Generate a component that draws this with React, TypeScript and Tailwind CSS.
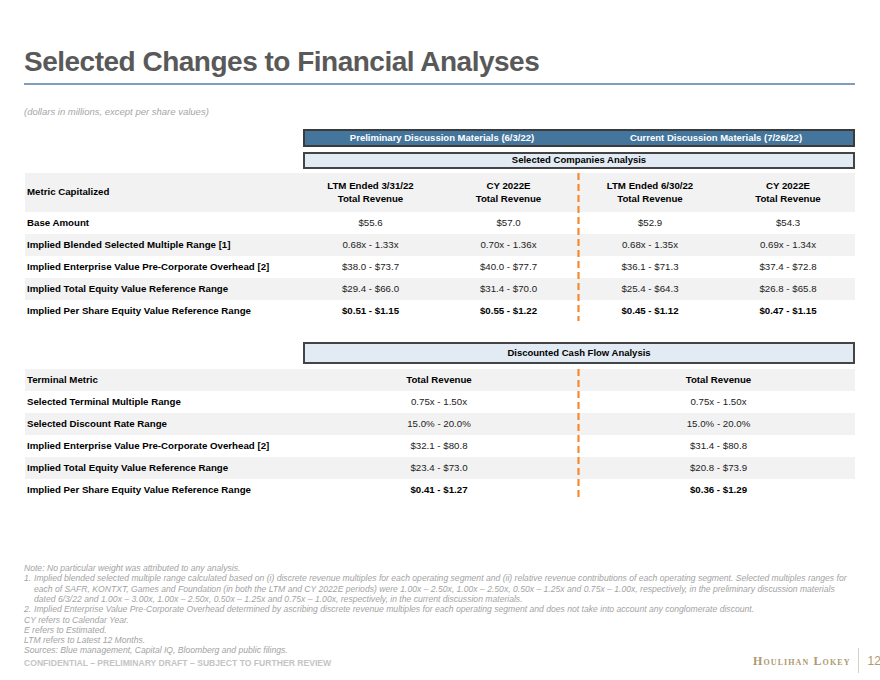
import React from "react"

const sans = { fontFamily: '"Liberation Sans", Arial, sans-serif' }

const companyRows = [
  { label: "Base Amount", vals: ["$55.6", "$57.0", "$52.9", "$54.3"] },
  { label: "Implied Blended Selected Multiple Range [1]", vals: ["0.68x - 1.33x", "0.70x - 1.36x", "0.68x - 1.35x", "0.69x - 1.34x"] },
  { label: "Implied Enterprise Value Pre-Corporate Overhead [2]", vals: ["$38.0 - $73.7", "$40.0 - $77.7", "$36.1 - $71.3", "$37.4 - $72.8"] },
  { label: "Implied Total Equity Value Reference Range", vals: ["$29.4 - $66.0", "$31.4 - $70.0", "$25.4 - $64.3", "$26.8 - $65.8"] },
  { label: "Implied Per Share Equity Value Reference Range", vals: ["$0.51 - $1.15", "$0.55 - $1.22", "$0.45 - $1.12", "$0.47 - $1.15"], bold: true },
]

const dcfRows = [
  { label: "Selected Terminal Multiple Range", vals: ["0.75x - 1.50x", "0.75x - 1.50x"] },
  { label: "Selected Discount Rate Range", vals: ["15.0% - 20.0%", "15.0% - 20.0%"] },
  { label: "Implied Enterprise Value Pre-Corporate Overhead [2]", vals: ["$32.1 - $80.8", "$31.4 - $80.8"] },
  { label: "Implied Total Equity Value Reference Range", vals: ["$23.4 - $73.0", "$20.8 - $73.9"] },
  { label: "Implied Per Share Equity Value Reference Range", vals: ["$0.41 - $1.27", "$0.36 - $1.29"], bold: true },
]

function DashedLine({ height }: { height: number }) {
  return (
    <svg className="absolute top-0 left-[552px]" width="3" height={height}>
      <line x1="1.5" y1="0" x2="1.5" y2={height} stroke="#f58a33" strokeWidth="2.2" strokeDasharray="7 4" />
    </svg>
  )
}

export default function App() {
  return (
    <div className="relative w-[880px] h-[680px] bg-white overflow-hidden flex flex-col" style={sans}>
      {/* title */}
      <div className="pt-[48px] px-[24px]">
        <h1 className="text-[28px] leading-none font-bold text-[#595959] tracking-[-0.5px]">
          Selected Changes to Financial Analyses
        </h1>
        <div className="mt-[7px] h-[2px] w-[831px] bg-[#7d9fbd]" />
        <p className="mt-[22px] text-[9.5px] leading-none italic text-[#a6a6a6]">
          (dollars in millions, except per share values)
        </p>
      </div>

      {/* selected companies */}
      <div className="mt-[12px] pl-[303px] w-[855px]">
        <div className="h-[18px] bg-[#44759c] border-2 border-[#3b3b3b] grid grid-cols-2 items-center text-white font-bold text-[9.5px] leading-none">
          <span className="text-center">Preliminary Discussion Materials (6/3/22)</span>
          <span className="text-center">Current Discussion Materials (7/26/22)</span>
        </div>
        <div className="mt-[5px] h-[17px] bg-[#e2ebf3] border-2 border-[#444] flex items-center justify-center font-bold text-[9.5px] leading-none text-black">
          Selected Companies Analysis
        </div>
      </div>

      <div className="relative mt-[4px] ml-[25px] w-[830px] text-[9.7px] leading-none">
        <DashedLine height={148} />
        <div className="grid grid-cols-[278px_138px_138px_138px_138px] h-[39px] bg-[#f2f2f2] items-center font-bold text-black">
          <span className="pl-[2px]">Metric Capitalized</span>
          {[["LTM Ended 3/31/22"], ["CY 2022E"], ["LTM Ended 6/30/22"], ["CY 2022E"]].map(([t], i) => (
            <div key={i} className={"flex flex-col items-center gap-[3px] " + (i < 2 ? "-ml-[3px]" : "ml-[4px]")}>
              <span>{t}</span>
              <span>Total Revenue</span>
            </div>
          ))}
        </div>
        {companyRows.map((r, i) => (
          <div
            key={r.label}
            className={
              "grid grid-cols-[278px_138px_138px_138px_138px] h-[22px] items-center " +
              (i % 2 === 1 ? "bg-[#f2f2f2]" : "bg-white")
            }
          >
            <span className="pl-[2px] font-bold text-black">{r.label}</span>
            {r.vals.map((v, j) => (
              <span
                key={j}
                className={
                  "text-center " +
                  (j < 2 ? "-ml-[3px] " : "ml-[4px] ") +
                  (r.bold ? "font-bold text-black" : "text-[#222]")
                }
              >
                {v}
              </span>
            ))}
          </div>
        ))}
      </div>

      {/* dcf */}
      <div className="mt-[20px] pl-[303px] w-[855px]">
        <div className="h-[22px] bg-[#e2ebf3] border-2 border-[#444] flex items-center justify-center font-bold text-[9.5px] leading-none text-black">
          Discounted Cash Flow Analysis
        </div>
      </div>

      <div className="relative mt-[5px] ml-[25px] w-[830px] text-[9.7px] leading-none">
        <DashedLine height={131} />
        <div className="grid grid-cols-[278px_275px_277px] h-[22px] bg-[#f2f2f2] items-center font-bold text-black">
          <span className="pl-[2px]">Terminal Metric</span>
          <span className="text-center -ml-[3px]">Total Revenue</span>
          <span className="text-center ml-[4px]">Total Revenue</span>
        </div>
        {dcfRows.map((r, i) => (
          <div
            key={r.label}
            className={
              "grid grid-cols-[278px_275px_277px] h-[22px] items-center " +
              (i % 2 === 1 ? "bg-[#f2f2f2]" : "bg-white")
            }
          >
            <span className="pl-[2px] font-bold text-black">{r.label}</span>
            {r.vals.map((v, j) => (
              <span
                key={j}
                className={
                  "text-center " +
                  (j === 0 ? "-ml-[3px] " : "ml-[4px] ") +
                  (r.bold ? "font-bold text-black" : "text-[#222]")
                }
              >
                {v}
              </span>
            ))}
          </div>
        ))}
      </div>

      {/* footnotes */}
      <div className="mt-auto mb-[12px] px-[24px] flex items-end justify-between">
        <div className="text-[8.6px] leading-[10.3px] italic text-[#a3a3a3] whitespace-nowrap">
          <div>Note: No particular weight was attributed to any analysis.</div>
          <div className="flex">
            <span className="w-[10px]">1.</span>
            <span>
              Implied blended selected multiple range calculated based on (i) discrete revenue multiples for each operating segment and (ii) relative revenue contributions of each operating segment. Selected multiples ranges for
            </span>
          </div>
          <div className="pl-[10px]">
            each of SAFR, KONTXT, Games and Foundation (in both the LTM and CY 2022E periods) were 1.00x – 2.50x, 1.00x – 2.50x, 0.50x – 1.25x and 0.75x – 1.00x, respectively, in the preliminary discussion materials
          </div>
          <div className="pl-[10px]">
            dated 6/3/22 and 1.00x – 3.00x, 1.00x – 2.50x, 0.50x – 1.25x and 0.75x – 1.00x, respectively, in the current discussion materials.
          </div>
          <div className="flex">
            <span className="w-[10px]">2.</span>
            <span>
              Implied Enterprise Value Pre-Corporate Overhead determined by ascribing discrete revenue multiples for each operating segment and does not take into account any conglomerate discount.
            </span>
          </div>
          <div>CY refers to Calendar Year.</div>
          <div>E refers to Estimated.</div>
          <div>LTM refers to Latest 12 Months.</div>
          <div>Sources: Blue management, Capital IQ, Bloomberg and public filings.</div>
          <div className="mt-[2px] not-italic font-bold text-[8.6px] text-[#c4c4c4]">
            CONFIDENTIAL – PRELIMINARY DRAFT – SUBJECT TO FURTHER REVIEW
          </div>
        </div>
      </div>
      <div className="absolute left-[753px] top-[648px] flex items-center h-[25px] whitespace-nowrap">
        <span
          className="text-[12px] font-semibold text-[#ad9a72] tracking-[1.1px] whitespace-nowrap"
          style={{ fontFamily: '"Liberation Serif", "Times New Roman", serif', fontVariant: "small-caps" }}
        >
          Houlihan Lokey
        </span>
        <span className="ml-[7px] w-px h-[25px] bg-[#d8d2c4]" />
        <span className="ml-[9px] text-[12px] text-[#b49a6a]">12</span>
      </div>
    </div>
  )
}
